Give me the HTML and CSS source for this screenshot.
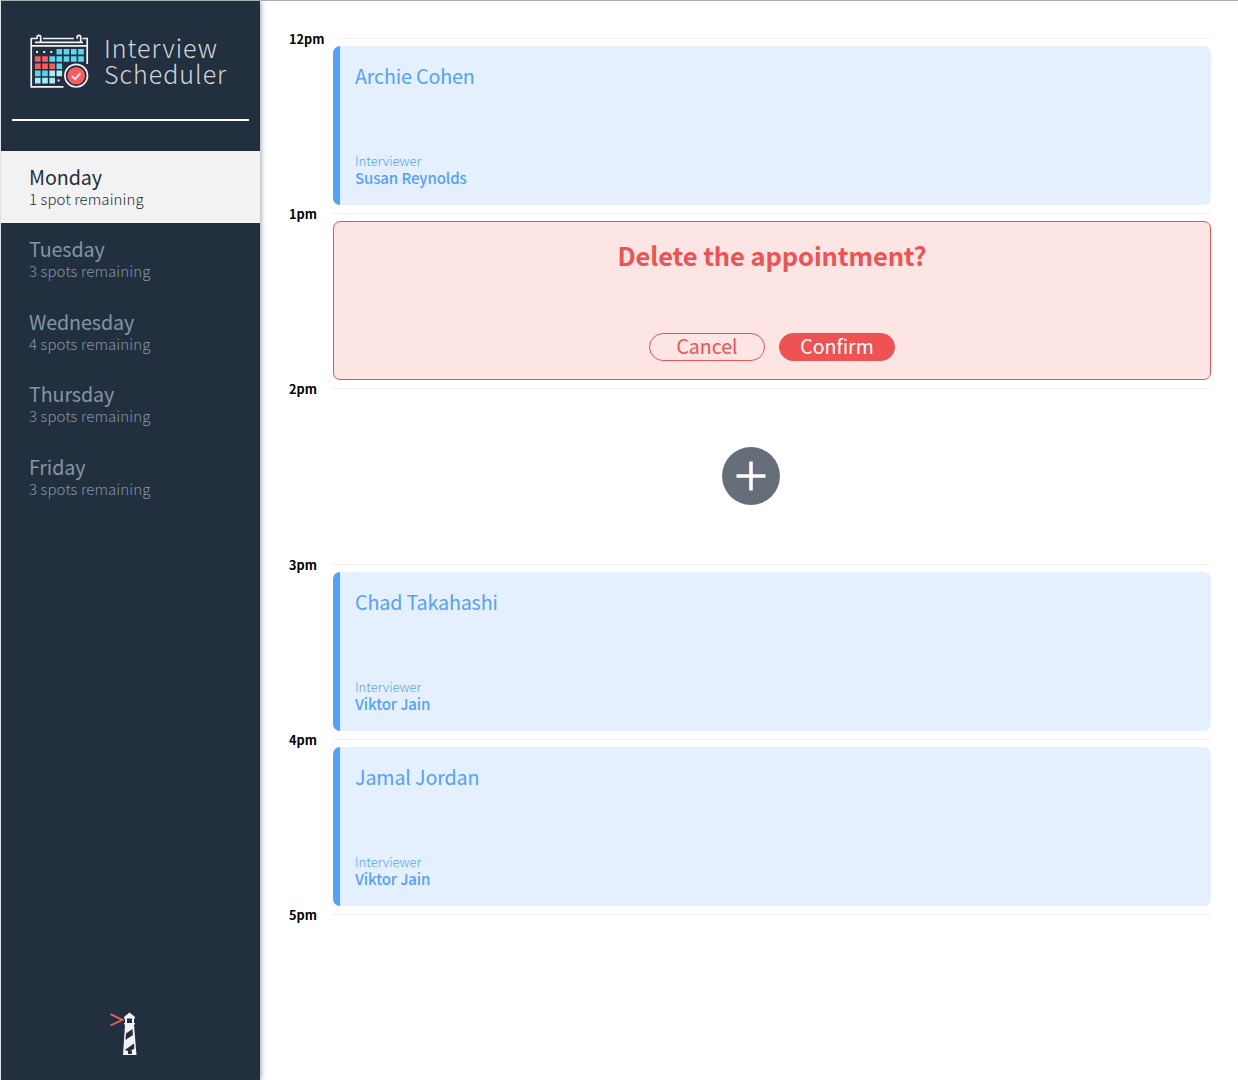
FILE: index.html
```html
<!DOCTYPE html>
<html lang="en">
<head>
<meta charset="utf-8">
<title>Interview Scheduler</title>
<link rel="stylesheet" href="styles.css">
</head>
<body>
<div class="layout">
  <aside class="sidebar">
    <div class="brand">
      <svg class="brand-icon" width="60" height="56" viewBox="0 0 60 56" fill="none">
        <g stroke="#f2f2f2" stroke-width="1.7">
          <path d="M34.5 52.800H2.200V4.500H8M14 4.500h31M53.500 4.500h4.700V30"/>
          <path d="M2.200 11.800h56M6 8.300h48"/>
          <path d="M11.700 8V3.200a1.800 1.800 0 0 0-3.600 0v1.500M51.700 8V3.200a1.800 1.800 0 0 0-3.600 0v1.500"/>
        </g>
        <g fill="#f2f2f2"><path d="M7 17h2v2H7zM14.200 17h2v2h-2zM21.300 17h2v2h-2zM28.600 45.500h2v2h-2z"/></g>
        <path fill="#56d9ef" d="M27.500 15h5.600v5.600h-5.600zM34.700 15h5.600v5.600h-5.600zM42 15h5.600v5.600H42zM49.200 15h5.600v5.600h-5.600zM20.400 22.200H26v5.600h-5.600zM27.500 22.200h5.600v5.600h-5.600zM34.700 22.200h5.600v5.600h-5.600zM42 22.200h5.600v5.600H42zM49.200 22.200h5.600v5.600h-5.600zM27.500 29.400h5.600V35h-5.600zM6 36.600h5.600v5.600H6zM13.200 36.600h5.600v5.600h-5.600z"/>
        <path fill="#ff5a5f" d="M6 22.200h5.600v5.600H6zM13.200 22.200h5.600v5.600h-5.600zM6 29.400h5.600V35H6zM13.200 29.400h5.600V35h-5.600zM20.400 29.400H26V35h-5.600z"/>
        <path fill="#a7effa" d="M20.400 36.600H26v5.600h-5.600zM27.500 36.600h5.600v5.600h-5.600zM6 43.800h5.600v5.600H6zM13.200 43.800h5.600v5.600h-5.600zM20.400 43.800H26v5.600h-5.600z"/>
        <circle cx="47.200" cy="41.700" r="13.200" fill="#222f3e"/>
        <circle cx="47.200" cy="41.700" r="11.300" stroke="#f2f2f2" stroke-width="1.700"/>
        <circle cx="47.200" cy="41.700" r="8.800" fill="#ff5a5f"/>
        <path d="m43 42.200 3 3 5.500-6" stroke="#f2f2f2" stroke-width="1.900"/>
      </svg>
      <div class="brand-name"><div>Interview</div><div>Scheduler</div></div>
    </div>
    <hr class="divider">
    <ul class="days">
      <li class="day day--selected"><h2>Monday</h2><p>1 spot remaining</p></li>
      <li class="day"><h2>Tuesday</h2><p>3 spots remaining</p></li>
      <li class="day"><h2>Wednesday</h2><p>4 spots remaining</p></li>
      <li class="day"><h2>Thursday</h2><p>3 spots remaining</p></li>
      <li class="day"><h2>Friday</h2><p>3 spots remaining</p></li>
    </ul>
    <svg class="lighthouse" width="28" height="44" viewBox="0 0 28 44" fill="none">
      <path d="M.5 2.200 12.500 7.800.5 13.500" stroke="#ec5f5c" stroke-width="1.900"/>
      <path fill="#f2f2f2" d="M14 5 19.500.500 25 5v1.500h-1V11h1v1.500h-1L26.500 43H13l2-30.500h-1V11h1V6.500h-1z"/>
      <path fill="#222f3e" d="M17 6.500h5V11h-5zM16 21.500l6.500-4.500.4 6-7.400 5zM14.800 38l9.200-6.500.4 5-4.800 3z"/>
      <path fill="#222f3e" d="M18 42v-2a2 2 0 0 1 4 0v2z"/>
    </svg>
  </aside>
  <main class="schedule">
    <section class="slot">
      <header class="hour hour--first"><h4>12pm</h4><hr></header>
      <article class="card booked"><h2>Archie Cohen</h2><div class="interviewer"><h4>Interviewer</h4><h3>Susan Reynolds</h3></div></article>
    </section>
    <section class="slot">
      <header class="hour"><h4>1pm</h4><hr></header>
      <article class="card confirm"><h1>Delete the appointment?</h1><div class="actions"><button class="button">Cancel</button><button class="button button--solid">Confirm</button></div></article>
    </section>
    <section class="slot">
      <header class="hour"><h4>2pm</h4><hr></header>
      <article class="empty">
        <svg width="58" height="58" viewBox="0 0 58 58"><circle cx="29" cy="29" r="29" fill="#666e7a"/><path d="M14.500 29h29M29 14.500v29" stroke="#fff" stroke-width="3.600"/></svg>
      </article>
    </section>
    <section class="slot">
      <header class="hour"><h4>3pm</h4><hr></header>
      <article class="card booked"><h2>Chad Takahashi</h2><div class="interviewer"><h4>Interviewer</h4><h3>Viktor Jain</h3></div></article>
    </section>
    <section class="slot">
      <header class="hour"><h4>4pm</h4><hr></header>
      <article class="card booked"><h2>Jamal Jordan</h2><div class="interviewer"><h4>Interviewer</h4><h3>Viktor Jain</h3></div></article>
    </section>
    <section class="slot"><header class="hour"><h4>5pm</h4><hr></header></section>
  </main>
</div>
</body>
</html>
```
FILE: styles.css
```css
* { box-sizing: border-box; margin: 0; padding: 0; }
body {
  font-family: "Noto Sans CJK SC", "Noto Sans", sans-serif;
  height: 1080px;
  overflow: hidden;
  background: #fff;
  border-top: 1px solid #a3b2ad;
  border-left: 1px solid #dfe3e6;
}
.layout { display: flex; height: 1079px; }
.sidebar {
  width: 259px;
  flex: none;
  display: flex;
  flex-direction: column;
  background: #222f3e;
  box-shadow: 1px 0 5px rgba(34, 47, 62, .45);
}
.brand { display: flex; gap: 15px; padding: 33px 0 0 28px; height: 118px; }
.brand-icon { flex: none; }
.brand-name { color: #d3d7db; font-size: 25px; font-weight: 300; line-height: 26px; letter-spacing: 1px; }
.divider { border: 0; height: 2px; background: #fff; margin: 0 11px 30px; flex: none; }
.days { list-style: none; }
.day { height: 72.400px; padding: 13px 28px 0; color: #8395a7; }
.day h2 { font-size: 19.700px; font-weight: 400; line-height: 26px; letter-spacing: -.1px; }
.day p { font-size: 15px; font-weight: 300; line-height: 18px; letter-spacing: .1px; }
.day--selected { background: #f2f2f2; color: #222f3e; }
.lighthouse { margin: auto auto 24px 109px; }
.schedule { flex: 1; padding: 29px 27px 0 29px; }
.slot { height: 175.200px; }
.hour { display: flex; justify-content: space-between; height: 16px; }
.hour h4 { font-size: 12.700px; font-weight: 700; line-height: 17px; }
.hour hr { width: 879px; height: 1px; border: 0; margin-top: 8px; background: #f0f0f2; }
.hour--first h4 { line-height: 18px; }
.hour--first hr { width: 872px; }
.card { width: 878px; height: 159px; margin-left: auto; border-radius: 7px; display: flex; flex-direction: column; justify-content: space-between; }
.booked { background: #e5f0ff; border-left: 7px solid #54a0ff; color: #54a0ff; padding: 16px 15px 18px; }
.booked h2 { font-size: 19.700px; font-weight: 400; line-height: 27px; letter-spacing: -.15px; }
.interviewer h4 { font-size: 13px; font-weight: 300; line-height: 17px; }
.interviewer h3 { font-size: 15px; font-weight: 500; line-height: 18px; letter-spacing: -.1px; }
.confirm { background: #fde5e4; border: 1px solid #ee5253; color: #ee5253; align-items: center; padding: 15px 0 18px; }
.confirm h1 { font-size: 25.500px; font-weight: 700; line-height: 36px; letter-spacing: -.1px; }
.actions { display: flex; gap: 14px; }
.button { width: 116px; height: 28px; border: 1px solid #ee5253; border-radius: 14px; background: transparent; color: #ee5253; font: 400 19.500px/24px "Noto Sans CJK SC", "Noto Sans", sans-serif; padding-bottom: 2px; }
.button--solid { background: #ee5253; color: #fff; }
.empty { display: flex; justify-content: center; padding: 51px 0 0 1px; }
```
